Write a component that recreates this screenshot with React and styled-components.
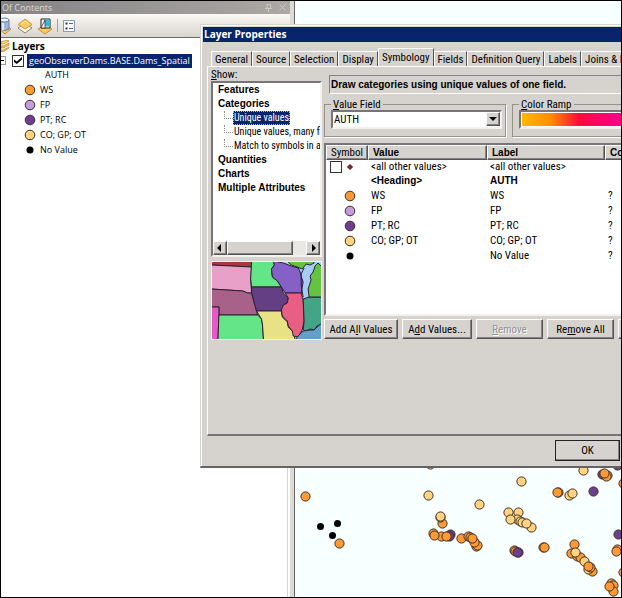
import React from 'react'
import styled, { createGlobalStyle, css } from 'styled-components'

const ORANGE = '#ff9933';
const LILAC = '#c49bdc';
const PURPLE = '#6c3f91';
const YELLOW = '#ffd37f';
const BLACK = '#000000';

const legend = [
  { label: 'WS', color: ORANGE },
  { label: 'FP', color: LILAC },
  { label: 'PT; RC', color: PURPLE },
  { label: 'CO; GP; OT', color: YELLOW },
  { label: 'No Value', color: BLACK },
];

const tabs = ['General', 'Source', 'Selection', 'Display', 'Symbology', 'Fields', 'Definition Query', 'Labels', 'Joins & Relates'];

// map points, [x, y, color] from the top left corner of the map
const dams = [
  [10, 495, ORANGE], [25, 525, BLACK], [42, 522, BLACK], [37, 534, BLACK], [44, 542, ORANGE],
  [135, 463, YELLOW], [133, 494, YELLOW], [184, 503, YELLOW], [226, 480, YELLOW], [288, 469, YELLOW],
  [147, 522, ORANGE], [145, 516, YELLOW], [145, 515, YELLOW],
  [155, 533, PURPLE], [154, 535, PURPLE], [138, 532, ORANGE], [146, 535, ORANGE], [139, 534, ORANGE], [151, 535, ORANGE],
  [166, 537, ORANGE], [173, 535, ORANGE], [175, 536, ORANGE], [181, 545, ORANGE], [182, 544, ORANGE], [179, 541, ORANGE], [177, 537, ORANGE],
  [213, 511, YELLOW], [223, 511, YELLOW], [222, 518, YELLOW], [225, 520, YELLOW], [227, 521, YELLOW], [215, 518, YELLOW], [236, 526, YELLOW], [231, 522, YELLOW],
  [219, 549, ORANGE], [220, 550, ORANGE], [223, 551, PURPLE], [222, 551, PURPLE],
  [248, 546, ORANGE], [249, 546, ORANGE],
  [263, 491, ORANGE], [262, 491, ORANGE], [274, 494, YELLOW], [277, 492, YELLOW], [298, 490, PURPLE],
  [307, 473, PURPLE], [312, 474, ORANGE], [311, 475, ORANGE], [309, 472, ORANGE], [322, 464, PURPLE],
  [323, 533, PURPLE], [322, 548, ORANGE], [321, 550, ORANGE], [328, 482, ORANGE], [328, 571, ORANGE],
  [279, 543, ORANGE], [276, 552, ORANGE], [282, 555, ORANGE], [285, 556, ORANGE], [280, 551, YELLOW],
  [289, 560, YELLOW], [297, 570, ORANGE], [293, 568, YELLOW], [295, 566, ORANGE], [293, 565, ORANGE],
  [316, 582, ORANGE], [318, 584, ORANGE], [318, 590, ORANGE], [314, 585, ORANGE],
];

const Symbol = ({ color }) => (
  <svg width="12" height="12" viewBox="0 0 12 12" aria-hidden="true">
    {color === BLACK
      ? <circle cx="6" cy="6" r="3.5" />
      : <circle cx="6" cy="6" r="4.8" fill={color} stroke="#3c3028" strokeWidth="1" />}
  </svg>
);

const DamMap = () => (
  <MapCanvas aria-label="Map of dams">
    {dams.map(([x, y, color], index) => (
      <circle
        key={index}
        cx={x + 0.5}
        cy={y + 0.5}
        r={color === BLACK ? 3.5 : 4.6}
        fill={color}
        stroke="#3c3028"
        strokeWidth={color === BLACK ? 0 : 1}
      />
    ))}
  </MapCanvas>
);

const StatesPreview = () => (
  <Preview viewBox="0 0 110 77" preserveAspectRatio="none" aria-label="Unique values example">
    <rect width="110" height="77" fill="#a7cdf5" />
    <g stroke="#2a2030" strokeWidth="1" strokeLinejoin="round">
      <path fill="#a83a3f" d="M-1-1H40V5L20 4L-1 3Z" />
      <path fill="#e8a0c8" d="M-1 3L20 4L40 5L39 17L40 31L36 31L31 29L-1 27Z" />
      <path fill="#a8628a" d="M-1 27L31 29L36 31L40 31L43 42L46 53L7 53V45H-1Z" />
      <path fill="#e65ac8" d="M-1 45H7V53L6 78H-1Z" />
      <path fill="#64e588" d="M7 53H46L50 57L51 63L52 78H6Z" />
      <path fill="#64e588" d="M40-1H62L63 3L60 7L61 15L66 19L70 25H40L39 17Z" />
      <path fill="#64c441" d="M76-1H103V1L99 3L95 2L91 7L86 5L80 3Z" />
      <path fill="#8560c6" d="M62-1L72 1L80 4L87 6L89 10L90 14L92 20L90 31H74L70 25L66 19L61 15L60 7L63 3Z" />
      <path fill="#643f84" d="M40 25H70L72 31L77 36L76 41L72 43L70 49H45L43 42L40 31Z" />
      <path fill="#e8e186" d="M45 49H70L71 55L76 60L77 65L82 70L84 78H52L51 63L50 57Z" />
      <path fill="#e85f83" d="M74 31H90L92 38L93 59L91 68L87 75L82 74L81 69L77 64L76 59L71 54L70 48L72 43L76 41L77 36Z" />
      <path fill="#43a486" d="M92 37L98 35H111V62L106 64L103 68L99 67L95 69L92 68L93 59Z" />
      <path fill="#649fca" d="M84 78L87 74L92 69L99 68L103 68L106 65L111 61V78Z" />
      <path fill="#64c441" d="M98 35L97 27L100 18L99 14L102 10L104 4L107 1L111 5V35Z" />
      <path fill="none" d="M92 35L90 23L90 12L93 6" />
    </g>
  </Preview>
);

const DatabaseIcon = () => (
  <svg width="12" height="18" viewBox="0 0 12 18" aria-hidden="true">
    <path d="M-2 12L4 8L10 12L4 17Z" fill="#ffcb5c" stroke="#b98f45" />
    <path d="M-1 3V12Q4 15 8 12V3Z" fill="#9fb4d6" stroke="#6480ad" />
    <ellipse cx="3.500" cy="3" rx="4.500" ry="2" fill="#eef4fc" stroke="#6480ad" />
    <path d="M2 6V13" stroke="#dfe8f5" strokeWidth="2" />
  </svg>
);

const SourceIcon = () => (
  <svg width="16" height="18" viewBox="0 0 16 18" aria-hidden="true">
    <path d="M1 11L8 6L15 11L8 16Z" fill="#fff6dc" stroke="#8d867a" />
    <path d="M1 7.500L8 2L15 7.500L8 12Z" fill="#ffcb5c" stroke="#c29a52" />
    <path d="M4 7L8 4L12 7" fill="none" stroke="#ffe3a0" />
  </svg>
);

const SelectionIcon = () => (
  <svg width="16" height="18" viewBox="0 0 16 18" aria-hidden="true">
    <path d="M1 12L8 8L15 12L8 17Z" fill="#ffcb5c" stroke="#b98f45" />
    <path d="M4 2H13V11H4Z" fill="#e9f5fa" stroke="#222" />
    <path d="M8 2.500H12.500V9.500H6Z" fill="#3cb8d4" />
    <path d="M4 11L8 3V11Z" fill="#fff" stroke="#222" strokeWidth="0.7" />
  </svg>
);

const OptionsIcon = () => (
  <svg width="14" height="16" viewBox="0 0 14 16" aria-hidden="true">
    <rect x="1.5" y="2.5" width="11" height="11" fill="#f8fafc" stroke="#8d9bb2" />
    <path d="M3.500 5.500h2M3.500 10.500h2" stroke="#24365c" strokeWidth="2" />
    <path d="M7 5.500h4M7 10.500h4" stroke="#50658c" />
  </svg>
);

const LayersIcon = () => (
  <svg width="9" height="12" viewBox="0 0 9 12" aria-hidden="true">
    <path d="M0 2L6 0L8 1L2 4L0 4Z" fill="#ffe08a" stroke="#b07d25" strokeWidth="0.7" />
    <path d="M0 6L2 6L8 3V5L2 8H0Z" fill="#ffc95a" stroke="#b07d25" strokeWidth="0.7" />
    <path d="M0 10H2L8 7V8L2 12H0Z" fill="#ffc95a" stroke="#b07d25" strokeWidth="0.7" />
  </svg>
);

const Arrow = ({ d }) => (
  <svg width="8" height="8" viewBox="0 0 8 8" aria-hidden="true"><path d={d} /></svg>
);

const TableOfContents = () => (
  <Toc>
    <TocTitle>
      <span>Of Contents</span>
      <svg width="22" height="8" viewBox="0 0 22 8" fill="none" stroke="#cdc9c2" aria-hidden="true">
        <path d="M2 .5H5.500V4M2 .5V4M0 4.500H7M3.500 5V8M14.500 .5L20.500 6.500M20.500 .5L14.500 6.500" />
      </svg>
    </TocTitle>
    <TocToolbar>
      <IconButton aria-label="List by source"><DatabaseIcon /></IconButton>
      <IconButton aria-label="List by visibility"><SourceIcon /></IconButton>
      <IconButton aria-label="List by selection"><SelectionIcon /></IconButton>
      <Separator />
      <IconButton aria-label="Options"><OptionsIcon /></IconButton>
    </TocToolbar>
    <TocBody>
      <LayersRow><LayersIcon />Layers</LayersRow>
      <TocRow>
        <Expander aria-label="Collapse layer" />
        <CheckBox id="layer" type="checkbox" defaultChecked />
        <LayerName htmlFor="layer">geoObserverDams.BASE.Dams_Spatial</LayerName>
      </TocRow>
      <FieldName>AUTH</FieldName>
      {legend.map(({ label, color }) => (
        <LegendRow key={label}><Symbol color={color} />{label}</LegendRow>
      ))}
    </TocBody>
  </Toc>
);

const LayerProperties = () => (
  <Dialog role="dialog" aria-labelledby="dialog-title">
    <DialogTitle id="dialog-title">Layer Properties</DialogTitle>
    <TabList role="tablist">
      {tabs.map((tab) => (
        <Tab key={tab} role="tab" aria-selected={tab === 'Symbology'} $active={tab === 'Symbology'}>{tab}</Tab>
      ))}
    </TabList>
    <TabPanel role="tabpanel">
      <SideColumn>
        <ShowLabel><u>S</u>how:</ShowLabel>
        <TreeBox>
          <Tree>
            <TreeItem>Features</TreeItem>
            <TreeItem>Categories</TreeItem>
            <TreeLeaf><TreeText $selected>Unique values</TreeText></TreeLeaf>
            <TreeLeaf><TreeText>Unique values, many fields</TreeText></TreeLeaf>
            <TreeLeaf><TreeText>Match to symbols in a style</TreeText></TreeLeaf>
            <TreeItem>Quantities</TreeItem>
            <TreeItem>Charts</TreeItem>
            <TreeItem>Multiple Attributes</TreeItem>
          </Tree>
          <ScrollBar>
            <SmallButton aria-label="Scroll left"><Arrow d="M5 0V8L1 4Z" /></SmallButton>
            <ScrollThumb />
            <SmallButton aria-label="Scroll right"><Arrow d="M3 0V8L7 4Z" /></SmallButton>
          </ScrollBar>
        </TreeBox>
        <StatesPreview />
      </SideColumn>
      <MainColumn>
        <Hint>Draw categories using unique values of one field.</Hint>
        <Groups>
          <Group $width="182px">
            <GroupLabel><label htmlFor="field"><u>V</u>alue Field</label></GroupLabel>
            <Combo>
              <ComboSelect id="field" defaultValue="AUTH"><option>AUTH</option></ComboSelect>
              <SmallButton as="span"><Arrow d="M0 2H8L4 6Z" /></SmallButton>
            </Combo>
          </Group>
          <Group $width="200px">
            <GroupLabel><u>C</u>olor Ramp</GroupLabel>
            <Combo><Ramp /></Combo>
          </Group>
        </Groups>
        <TableBox>
          <Table>
            <colgroup><col width="42" /><col width="119" /><col width="118" /><col width="60" /></colgroup>
            <thead>
              <tr><Th $plain>Symbol</Th><Th>Value</Th><Th>Label</Th><Th>Count</Th></tr>
            </thead>
            <tbody>
              <Row>
                <td>
                  <SymbolCell>
                    <CheckBox type="checkbox" aria-label="All other values" />
                    <svg width="12" height="12" viewBox="0 0 12 12" aria-hidden="true">
                      <path d="M6 3.500L8.500 6L6 8.500L3.500 6Z" fill="#a02020" stroke="#401010" />
                    </svg>
                  </SymbolCell>
                </td>
                <td>&lt;all other values&gt;</td><td>&lt;all other values&gt;</td><td />
              </Row>
              <Row $bold><td /><td>&lt;Heading&gt;</td><td>AUTH</td><td /></Row>
              {legend.map(({ label, color }) => (
                <Row key={label} $tall>
                  <td><SymbolCell><Symbol color={color} /></SymbolCell></td>
                  <td>{color === BLACK ? '' : label}</td>
                  <td>{label}</td>
                  <td>?</td>
                </Row>
              ))}
            </tbody>
          </Table>
        </TableBox>
        <Actions>
          <Button $width="74px">Add A<u>l</u>l Values</Button>
          <Button $width="70px">A<u>d</u>d Values...</Button>
          <Button $width="67px" disabled><u>R</u>emove</Button>
          <Button $width="67px">Re<u>m</u>ove All</Button>
          <Button $width="67px" aria-label="Advanced" />
        </Actions>
      </MainColumn>
    </TabPanel>
    <DialogFooter><OkButton>OK</OkButton></DialogFooter>
  </Dialog>
);

const App = () => {
  return (
    <>
      <GlobalStyle />
      <Screen>
        <TableOfContents />
        <Splitter />
        <DamMap />
        <LayerProperties />
      </Screen>
    </>
  );
};

export default App;


const GlobalStyle = createGlobalStyle`
  * {
    box-sizing: border-box;
  }

  body {
    margin: 0;
    font-family: "Roboto Condensed", Lato, sans-serif;
    font-size: 11px;
    color: #000;
  }

  button, select, input {
    font: inherit;
    color: inherit;
    margin: 0;
    padding: 0;
  }
`;

const raised = css`
  background: #d6d3ce;
  border: 1px solid;
  border-color: #fff #555 #555 #fff;
  box-shadow: inset -1px -1px 0 #848284;
`;

const sunken = css`
  border: 2px solid;
  border-color: #77747a #f4f2ee #f4f2ee #77747a;
`;

const boldText = css`
  font-family: "Liberation Sans", sans-serif;
  font-size: 10px;
  font-weight: bold;
`;

const Screen = styled.div`
  position: relative;
  display: flex;
  min-height: 100vh;
  border: 1px solid #000;
  overflow: hidden;
  white-space: nowrap;
`;

const Toc = styled.aside`
  display: flex;
  flex-direction: column;
  flex: 0 0 289px;
  font-family: "Open Sans", sans-serif;
  font-size: 9px;
  background: #fff;
`;

const TocTitle = styled.header`
  display: flex;
  align-items: center;
  justify-content: space-between;
  height: 13px;
  padding: 0 3px 0 1px;
  color: #dedbd5;
  background: linear-gradient(90deg, #848284, #aba8a5);
`;

const TocToolbar = styled.div`
  display: flex;
  align-items: center;
  gap: 4px;
  height: 24px;
  background: linear-gradient(#fbf8f6, #d9d5cd);
  border-bottom: 1px solid #6b686b;
`;

const IconButton = styled.button`
  display: flex;
  border: 0;
  background: none;
`;

const Separator = styled.span`
  width: 1px;
  height: 13px;
  background: #a5a29c;
`;

const TocBody = styled.div`
  flex: 1;
  border-right: 1px solid #d6d3ce;
  margin-right: 2px;
`;

const TocRow = styled.div`
  display: flex;
  align-items: center;
  gap: 2px;
  height: 15px;
`;

const LayersRow = styled(TocRow)`
  font-size: 10px;
  font-weight: bold;
`;

const Expander = styled.button`
  width: 5px;
  height: 9px;
  margin-right: 4px;
  border: 1px solid #9a9a9a;
  border-left: 0;
  background: linear-gradient(#000, #000) left center / 3px 1px no-repeat;
`;

const CheckBox = styled.input`
  appearance: none;
  flex: none;
  display: grid;
  place-items: center;
  width: 12px;
  height: 12px;
  border: 1px solid #333;
  background: #fff;

  &:checked::before {
    content: "";
    width: 8px;
    height: 7px;
    background: #000;
    clip-path: polygon(0 35%, 35% 65%, 100% 0, 100% 35%, 35% 100%, 0 70%);
  }
`;

const LayerName = styled.label`
  margin-left: 1px;
  padding: 0 2px;
  line-height: 14px;
  color: #fff;
  background: #08246b;
`;

const FieldName = styled.div`
  height: 14px;
  line-height: 14px;
  padding-left: 44px;
`;

const LegendRow = styled.div`
  display: flex;
  align-items: center;
  gap: 4px;
  height: 15px;
  padding-left: 23px;
`;

const Splitter = styled.div`
  flex: 0 0 5px;
  background: #dedad4;
  border-right: 1px solid #6b686b;
`;

const MapCanvas = styled.svg`
  flex: 1;
  min-width: 0;
  background: #f7ffff;
`;

const Dialog = styled.section`
  position: absolute;
  top: 23px;
  left: 199px;
  right: 0;
  padding: 2px 0 5px 2px;
  background: #d6d3ce;
  border: 1px solid #d6d3ce;
  border-right: 0;
  border-bottom: 2px solid #666366;
  box-shadow: inset 1px 1px 0 #fff;
  overflow: hidden;
`;

const DialogTitle = styled.h1`
  margin: 0;
  padding-left: 1px;
  font-family: "Open Sans", sans-serif;
  font-size: 10px;
  font-weight: bold;
  line-height: 15px;
  color: #fff;
  background: #08246b;
`;

const TabList = styled.div`
  display: flex;
  align-items: flex-end;
  height: 24px;
  padding-left: 8px;
`;

const Tab = styled.button`
  flex: none;
  height: ${({ $active }) => ($active ? '18px' : '15px')};
  padding: 0 3px;
  background: #d6d3ce;
  border: 1px solid;
  border-color: #fff #555 transparent #fff;
  border-bottom: 0;
`;

const TabPanel = styled.div`
  display: flex;
  gap: 2px;
  margin-left: 4px;
  padding: 1px 0 94px 3px;
  border: 1px solid;
  border-color: #fff #fff #77747a #fff;
  border-right: 0;
  border-bottom-width: 2px;
`;

const SideColumn = styled.div`
  flex: 0 0 111px;
  min-width: 0;
`;

const ShowLabel = styled.div`
  line-height: 13px;
`;

const TreeBox = styled.div`
  ${sunken}
  height: 176px;
  display: flex;
  flex-direction: column;
  justify-content: space-between;
  margin-bottom: 4px;
  background: #fff;
  overflow: hidden;
`;

const Tree = styled.ul`
  margin: 0;
  padding: 0 0 0 5px;
  list-style: none;
  line-height: 14px;
`;

const TreeItem = styled.li`
  ${boldText}
`;

const TreeLeaf = styled.li`
  display: flex;
  height: 14px;
  margin-left: 6px;
  font-size: 10px;

  &::before {
    content: "";
    flex: none;
    width: 8px;
    height: 7px;
    border-left: 1px dotted #888;
    border-bottom: 1px dotted #888;
  }
`;

const TreeText = styled.span`
  padding: 0 1px;
  color: ${({ $selected }) => ($selected ? '#fff' : '#000')};
  background: ${({ $selected }) => ($selected ? '#08246b' : 'none')};
  outline: ${({ $selected }) => ($selected ? '1px dotted #d8b060' : 'none')};
  outline-offset: -1px;
`;

const ScrollBar = styled.div`
  display: flex;
  height: 14px;
  background: #eae8e4;
`;

const SmallButton = styled.button`
  ${raised}
  flex: none;
  display: grid;
  place-items: center;
  width: 14px;
  height: 14px;

  &:last-child {
    margin-left: auto;
  }
`;

const ScrollThumb = styled.div`
  ${raised}
  flex: 0 0 66px;
`;

const Preview = styled.svg`
  display: block;
  width: 111px;
  height: 79px;
  border: 1px solid #f4f2ee;
`;

const MainColumn = styled.div`
  flex: 1;
  min-width: 0;
`;

const Hint = styled.p`
  ${boldText}
  margin: 7px 0 5px 5px;
  padding-left: 1px;
  line-height: 17px;
  border: 1px solid;
  border-color: #84828a #fff #fff #84828a;
  border-right: 0;
`;

const Groups = styled.div`
  display: flex;
  gap: 6px;
  margin-bottom: 6px;
`;

const Group = styled.fieldset`
  flex: 0 0 ${({ $width }) => $width};
  min-width: 0;
  height: 38px;
  margin: 0;
  padding: 0 3px 6px 6px;
  border: 1px solid #94918e;
  box-shadow: 1px 1px 0 #fff;
`;

const GroupLabel = styled.legend`
  padding: 0 2px;
  line-height: 11px;
`;

const Combo = styled.div`
  ${sunken}
  display: flex;
  height: 19px;
  background: #fff;
`;

const ComboSelect = styled.select`
  appearance: none;
  flex: 1;
  min-width: 0;
  padding-left: 1px;
  border: 0;
  background: #fff;
`;

const Ramp = styled.div`
  flex: 1;
  margin: 1px;
  background: linear-gradient(90deg, #ffb800, #ff8c00 16%, #ff0a3c 31%, #ff0090 54%, #ff00c8);
`;

const TableBox = styled.div`
  ${sunken}
  border-right: 0;
  height: 173px;
  background: #fff;
  overflow: hidden;
`;

const Table = styled.table`
  width: 339px;
  table-layout: fixed;
  border-collapse: separate;
  border-spacing: 0;

  td {
    padding: 0 0 0 3px;
  }
`;

const Th = styled.th`
  ${raised}
  height: 15px;
  padding: 0 0 0 4px;
  line-height: 12px;
  text-align: left;
  ${({ $plain }) => ($plain ? 'font-weight: normal;' : boldText)}
`;

const Row = styled.tr`
  height: ${({ $tall }) => ($tall ? '15px' : '14px')};
  line-height: 14px;
  ${({ $bold }) => $bold && boldText}
`;

const SymbolCell = styled.div`
  display: flex;
  align-items: center;
  justify-content: flex-end;
  gap: 2px;
  padding-right: 12px;
`;

const Actions = styled.div`
  display: flex;
  gap: 4px;
  margin-top: 3px;
`;

const Button = styled.button`
  ${raised}
  flex: 0 0 ${({ $width }) => $width};
  height: 20px;

  &:disabled {
    color: #949194;
    text-shadow: 1px 1px 0 #fff;
  }
`;

const DialogFooter = styled.footer`
  display: flex;
  justify-content: flex-end;
  padding: 4px 1px 0 0;
`;

const OkButton = styled.button`
  ${raised}
  width: 65px;
  height: 21px;
  outline: 1px solid #222;
  outline-offset: -1px;
`;
